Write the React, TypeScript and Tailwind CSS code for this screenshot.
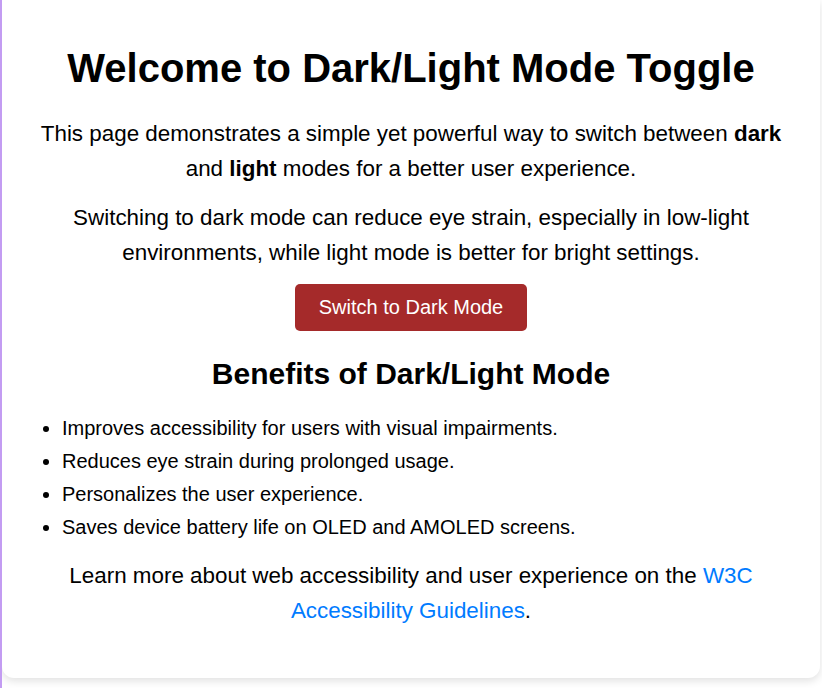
import React, { useState } from 'react';

const App: React.FC = () => {
  const [dark, setDark] = useState(false);

  const benefits = [
    'Improves accessibility for users with visual impairments.',
    'Reduces eye strain during prolonged usage.',
    'Personalizes the user experience.',
    'Saves device battery life on OLED and AMOLED screens.',
  ];

  return (
    <div
      className="min-h-[688px] w-[822px] bg-white border-l-2 border-[#c39cf2] overflow-hidden"
      style={{ fontFamily: "'Liberation Sans', Arial, sans-serif" }}
    >
      <div className="w-[818px] bg-white rounded-b-[12px] shadow-[0_3px_8px_rgba(0,0,0,0.12)] px-5 pt-[45px] pb-[50px] text-black text-center">
        <h1 className="text-[40px] font-bold leading-[46px] mb-[25px]">Welcome to Dark/Light Mode Toggle</h1>

        <p className="text-[22.4px] leading-[35px] mb-[14px]">
          This page demonstrates a simple yet powerful way to switch between <strong>dark</strong> and <strong>light</strong> modes for a better user experience.
        </p>
        <p className="text-[22.4px] leading-[35px] mb-[14px]">
          Switching to dark mode can reduce eye strain, especially in low-light environments, while light mode is better for bright settings.
        </p>

        <button
          onClick={() => setDark(!dark)}
          className="bg-[#a52a2a] text-white text-[20px] leading-[23px] px-6 py-3 rounded-[5px] cursor-pointer"
        >
          {dark ? 'Switch to Light Mode' : 'Switch to Dark Mode'}
        </button>

        <h2 className="text-[30px] font-bold leading-[35px] mt-[25px] mb-[22px]">Benefits of Dark/Light Mode</h2>

        <ul className="list-disc pl-10 text-left text-[20px]">
          {benefits.map((b) => (
            <li key={b} className="leading-[30px] mb-[3px]">{b}</li>
          ))}
        </ul>

        <p className="text-[22.4px] leading-[35px] mt-[16px]">
          Learn more about web accessibility and user experience on the{' '}
          <a href="#" className="text-[#007bff]">W3C Accessibility Guidelines</a>.
        </p>
      </div>
    </div>
  );
};

export default App;
